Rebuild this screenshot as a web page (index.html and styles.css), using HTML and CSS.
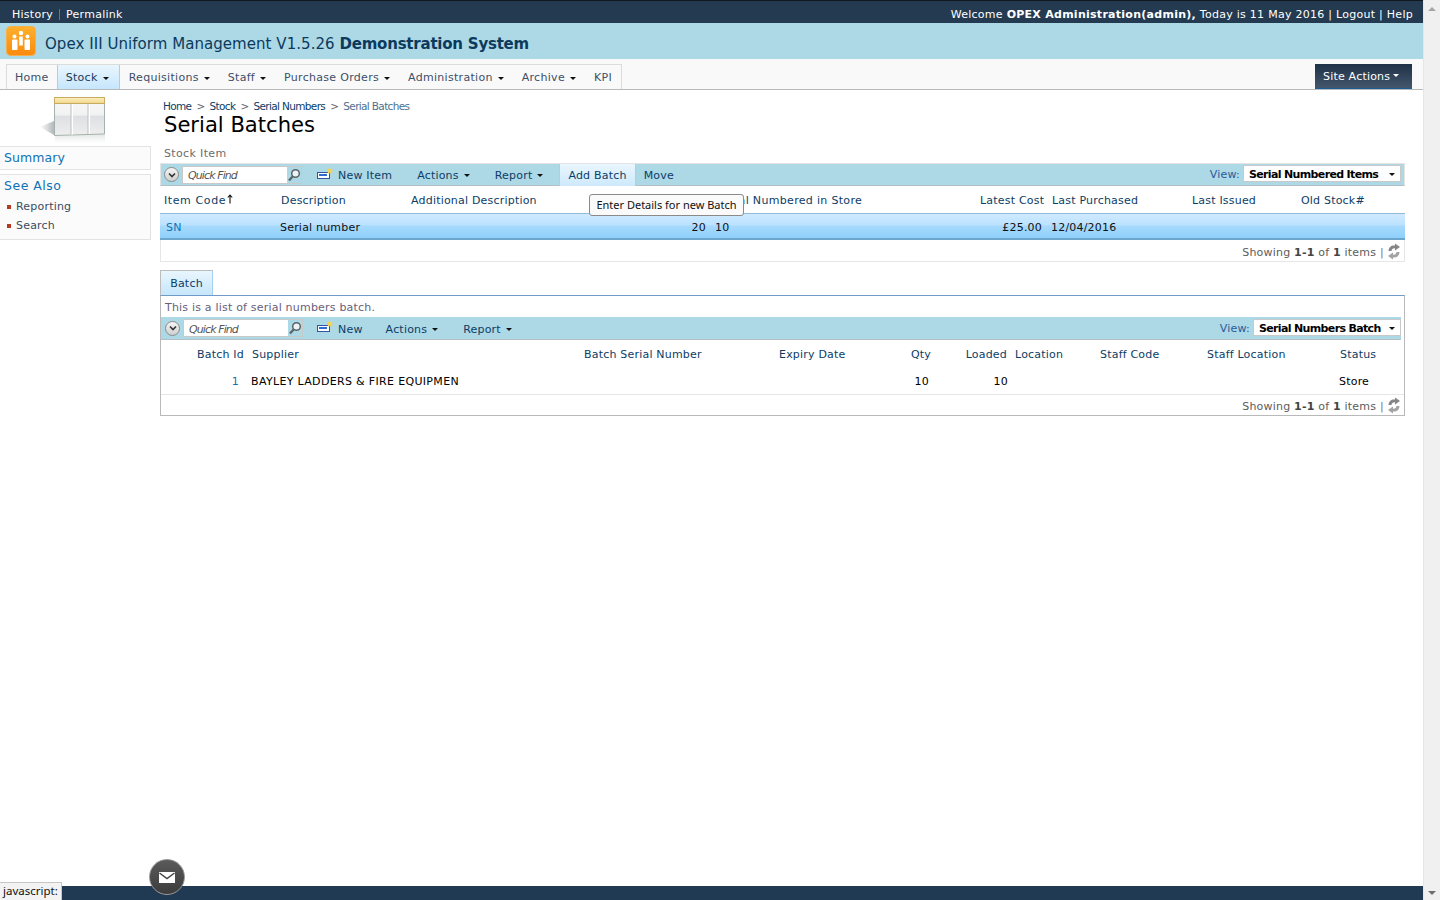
FILE: index.html
```html
<!DOCTYPE html>
<html lang="en">
<head>
<meta charset="utf-8">
<title>Serial Batches</title>
<link rel="stylesheet" href="styles.css">
</head>
<body>
<div class="app">
  <div class="page">
    <header class="topbar">
      <div class="topbar-left"><a>History</a><span class="pipe"></span><a>Permalink</a></div>
      <div class="topbar-right">Welcome <b>OPEX Administration(admin),</b> Today is 11 May 2016 | Logout | Help</div>
    </header>
    <div class="brand">
      <svg class="brand-logo" width="32" height="31" viewBox="0 0 32 31">
        <defs><linearGradient id="lg" x1="0" y1="0" x2="0" y2="1"><stop offset="0" stop-color="#fdb02c"/><stop offset="1" stop-color="#fb8a0e"/></linearGradient></defs>
        <rect x="0.5" y="0.5" width="29" height="29" rx="4" fill="url(#lg)" stroke="#f5b04a"/>
        <circle cx="15" cy="7" r="2.2" fill="#fff"/>
        <circle cx="8.5" cy="10.5" r="2" fill="#fff"/>
        <circle cx="21.5" cy="10.5" r="2" fill="#fff"/>
        <rect x="6" y="13.5" width="5.500" height="10.500" rx="1" fill="#fff"/>
        <rect x="18.5" y="13.5" width="5.500" height="10.500" rx="1" fill="#fff"/>
        <rect x="13.2" y="10.5" width="3.600" height="9" fill="#fff"/>
      </svg>
      <div class="brand-title">Opex III Uniform Management V1.5.26 <b>Demonstration System</b></div>
    </div>
    <nav class="navbar">
      <ul class="menu">
        <li class="menu-item home">Home</li>
        <li class="menu-item active">Stock<i class="caret"></i></li>
        <li class="menu-item">Requisitions<i class="caret"></i></li>
        <li class="menu-item">Staff<i class="caret"></i></li>
        <li class="menu-item">Purchase Orders<i class="caret"></i></li>
        <li class="menu-item">Administration<i class="caret"></i></li>
        <li class="menu-item">Archive<i class="caret"></i></li>
        <li class="menu-item">KPI</li>
      </ul>
      <div class="site-actions">Site Actions<i class="caret white"></i></div>
    </nav>
    <div class="content">
      <aside class="sidebar">
        <svg class="page-icon" width="70" height="50" viewBox="0 0 70 50">
          <defs>
            <linearGradient id="hd" x1="0" y1="0" x2="0" y2="1"><stop offset="0" stop-color="#fdf0c0"/><stop offset="1" stop-color="#f2d588"/></linearGradient>
            <linearGradient id="sh" x1="1" y1="0" x2="0" y2="0"><stop offset="0" stop-color="#b4b8ba"/><stop offset="1" stop-color="#fff"/></linearGradient>
            <linearGradient id="bd" x1="0" y1="0" x2="0" y2="1"><stop offset="0" stop-color="#f8f8f8"/><stop offset="0.45" stop-color="#f2f2f3"/><stop offset="0.5" stop-color="#dfe0e3"/><stop offset="1" stop-color="#eeeeef"/></linearGradient>
            <linearGradient id="rf" x1="0" y1="0" x2="0" y2="1"><stop offset="0" stop-color="#e4e8e6"/><stop offset="1" stop-color="#fff"/></linearGradient>
          </defs>
          <polygon points="0,31 14,25 14,39" fill="url(#sh)"/>
          <polygon points="15,40 65,38 65,47 15,47" fill="url(#rf)"/>
          <polygon points="14.500,1.500 64.500,1.500 64.500,38 14.500,39.500" fill="url(#bd)" stroke="#a3b2aa"/>
          <rect x="14.500" y="1.500" width="50" height="6" fill="url(#hd)" stroke="#c6ab62"/>
          <path d="M32 8V38.500M49 8V38" stroke="#fff" stroke-width="2"/>
          <path d="M31 8V38.500M48 8V38" stroke="#b9c0bc"/>
        </svg>
        <div class="side-box"><a class="side-title">Summary</a></div>
        <div class="side-box side-box-b">
          <a class="side-title wide">See Also</a>
          <ul class="side-list">
            <li>Reporting</li>
            <li>Search</li>
          </ul>
        </div>
      </aside>
      <main class="main">
        <div class="crumbs"><a>Home</a><span>&gt;</span><a>Stock</a><span>&gt;</span><a>Serial Numbers</a><span>&gt;</span><em>Serial Batches</em></div>
        <h1 class="page-title">Serial Batches</h1>
        <div class="section-label">Stock Item</div>

        <section class="list">
          <div class="toolbar">
            <span class="circle"><svg width="10" height="10" viewBox="0 0 10 10"><path d="M2 3.500L5 6.500 8 3.500" fill="none" stroke="#333" stroke-width="1.600"/></svg></span>
            <div class="quickfind"><span>Quick Find</span><i class="qf-btn"><svg width="14" height="14" viewBox="0 0 14 14"><circle cx="8.500" cy="5.500" r="3.800" fill="#eef3f5" stroke="#5c6468" stroke-width="1.500"/><path d="M5.600 8.400L2 12.500" stroke="#5c6468" stroke-width="2.200"/></svg></i></div>
            <span class="tb-item tb-new"><svg class="new-ic" width="16" height="12" viewBox="0 0 16 12"><rect x="0.500" y="4.500" width="12" height="6" fill="#fff" stroke="#33539e"/><rect x="2" y="6" width="8" height="2" fill="#2f6bd0"/><path d="M10.500 3H15.500M13 0.500V5.500M11 1L15 5M15 1L11 5" stroke="#f7d24a" stroke-width="1.100"/></svg><span>New Item</span></span>
            <span class="tb-item tb-actions">Actions<i class="caret"></i></span>
            <span class="tb-item tb-report">Report<i class="caret"></i></span>
            <span class="tb-item tb-hover">Add Batch</span>
            <span class="tb-item tb-move">Move</span>
            <span class="view">View:<span class="view-select vs-a">Serial Numbered Items<i class="caret black"></i></span></span>
          </div>
          <div class="row head grid-a">
            <span class="item-code">Item Code<svg class="sort" width="6" height="10" viewBox="0 0 6 10"><path d="M3 9.500V1M0.800 3.500L3 1 5.200 3.500" fill="none" stroke="#111" stroke-width="1.100"/></svg></span>
            <span>Description</span>
            <span>Additional Description</span>
            <span></span>
            <span class="serial-head">Serial Numbered in Store</span>
            <span class="right pr8">Latest Cost</span>
            <span>Last Purchased</span>
            <span>Last Issued</span>
            <span>Old Stock#</span>
          </div>
          <div class="row data selected grid-a">
            <span class="link shift2">SN</span>
            <span class="shift-1">Serial number</span>
            <span></span>
            <span class="right pr9">20</span>
            <span>10</span>
            <span class="right pr10">£25.00</span>
            <span class="shift-1">12/04/2016</span>
            <span></span>
            <span></span>
          </div>
          <div class="pager"><span class="pager-text">Showing <b>1-1</b> of <b>1</b> items<span class="bar">|</span></span>
            <svg class="refresh" width="14" height="17" viewBox="0 0 14 17"><path d="M1.500 8C1.700 4 4.500 2 8 2.500L8 0.500 13 4 8 7.500 8 5.300C6 5 4.800 6 4.500 8Z" fill="#858585"/><path d="M12.500 9C12.300 13 9.500 15 6 14.500L6 16.500 1 13 6 9.500 6 11.700C8 12 9.200 11 9.500 9Z" fill="#a3a3a3"/></svg>
          </div>
          <div class="tooltip">Enter Details for new Batch</div>
        </section>

        <div class="tabs"><span class="tab">Batch</span></div>
        <section class="panel">
          <div class="panel-desc">This is a list of serial numbers batch.</div>
          <div class="toolbar toolbar-b">
            <span class="circle"><svg width="10" height="10" viewBox="0 0 10 10"><path d="M2 3.500L5 6.500 8 3.500" fill="none" stroke="#333" stroke-width="1.600"/></svg></span>
            <div class="quickfind"><span>Quick Find</span><i class="qf-btn"><svg width="14" height="14" viewBox="0 0 14 14"><circle cx="8.500" cy="5.500" r="3.800" fill="#eef3f5" stroke="#5c6468" stroke-width="1.500"/><path d="M5.600 8.400L2 12.500" stroke="#5c6468" stroke-width="2.200"/></svg></i></div>
            <span class="tb-item tb-new"><svg class="new-ic" width="16" height="12" viewBox="0 0 16 12"><rect x="0.500" y="4.500" width="12" height="6" fill="#fff" stroke="#33539e"/><rect x="2" y="6" width="8" height="2" fill="#2f6bd0"/><path d="M10.500 3H15.500M13 0.500V5.500M11 1L15 5M15 1L11 5" stroke="#f7d24a" stroke-width="1.100"/></svg><span>New</span></span>
            <span class="tb-item tb-actions">Actions<i class="caret"></i></span>
            <span class="tb-item tb-report-b">Report<i class="caret"></i></span>
            <span class="view">View:<span class="view-select vs-b">Serial Numbers Batch<i class="caret black"></i></span></span>
          </div>
          <div class="row head head-b grid-b">
            <span class="right pr8">Batch Id</span>
            <span>Supplier</span>
            <span>Batch Serial Number</span>
            <span>Expiry Date</span>
            <span class="right">Qty</span>
            <span class="right pr8">Loaded</span>
            <span>Location</span>
            <span>Staff Code</span>
            <span>Staff Location</span>
            <span>Status</span>
          </div>
          <div class="row data data-b grid-b">
            <span class="right pr13 link">1</span>
            <span class="shift-1 supplier">BAYLEY LADDERS &amp; FIRE EQUIPMEN</span>
            <span></span>
            <span></span>
            <span class="right pr2">10</span>
            <span class="right pr7">10</span>
            <span></span>
            <span></span>
            <span></span>
            <span class="shift-1">Store</span>
          </div>
          <div class="pager pager-b"><span class="pager-text">Showing <b>1-1</b> of <b>1</b> items<span class="bar">|</span></span>
            <svg class="refresh" width="14" height="17" viewBox="0 0 14 17"><path d="M1.500 8C1.700 4 4.500 2 8 2.500L8 0.500 13 4 8 7.500 8 5.300C6 5 4.800 6 4.500 8Z" fill="#858585"/><path d="M12.500 9C12.300 13 9.500 15 6 14.500L6 16.500 1 13 6 9.500 6 11.700C8 12 9.200 11 9.500 9Z" fill="#a3a3a3"/></svg>
          </div>
        </section>
      </main>
    </div>
    <footer class="bottombar"></footer>
  </div>
  <div class="scrollbar"><i class="arrow up"></i><i class="arrow down"></i></div>
</div>
<div class="status">javascript:</div>
<div class="mail"><svg width="18" height="13" viewBox="0 0 18 13"><rect x="1" y="1" width="16" height="11" fill="#fff"/><path d="M1.500 2L9 7.500 16.500 2" fill="none" stroke="#444" stroke-width="1.500"/></svg></div>
</body>
</html>
```

FILE: styles.css
```css
* { box-sizing: border-box; }
html, body { margin: 0; padding: 0; height: 900px; overflow: hidden; background: #fff; }
body { font: 11px/13px "DejaVu Sans", Verdana, sans-serif; letter-spacing: 0.2px; color: #000; position: relative; }
ul { list-style: none; margin: 0; padding: 0; }

.app { display: flex; height: 900px; }
.page { width: 1423px; display: flex; flex-direction: column; height: 900px; }
.scrollbar { width: 17px; background: #f0f0f0; border-left: 1px solid #e6e6e6; display: flex; flex-direction: column; justify-content: space-between; align-items: center; padding: 7px 0 5px; }
.arrow { width: 0; height: 0; border-left: 4px solid transparent; border-right: 4px solid transparent; }
.arrow.up { border-bottom: 4px solid #a6a6a6; }
.arrow.down { border-top: 4px solid #6f6f6f; }

.topbar { height: 23px; background: #243a51; border-top: 1px solid #10171f; color: #fff; display: flex; justify-content: space-between; padding: 7px 10px 0 12px; letter-spacing: 0.27px; }
.topbar-left { display: flex; align-items: flex-start; }
.pipe { width: 1px; height: 11px; background: #64758a; margin: 1px 6px; }
.topbar-right b { font-weight: 700; }

.brand { height: 36px; background: #add8e6; display: flex; align-items: center; padding-left: 6px; }
.brand-logo { flex: none; margin-top: 1px; }
.brand-title { font-size: 15px; line-height: 20px; letter-spacing: 0.05px; color: #0b3a5d; margin: 6px 0 0 7px; white-space: nowrap; }
.brand-title b { letter-spacing: -0.22px; }

.navbar { height: 31px; background: #f9f9f9; border-bottom: 1px solid #b9b9b9; display: flex; justify-content: space-between; padding: 5px 11px 0 6px; letter-spacing: 0.3px; }
.menu { display: flex; height: 25px; border: 1px solid #dcdcdc; border-bottom: 0; }
.menu-item { display: flex; align-items: center; padding: 2px 8px 0 9px; color: #3c4f68; white-space: nowrap; line-height: 22px; }
.menu-item:last-child { padding-right: 9px; }
.menu-item.home { padding-left: 8px; padding-right: 8px; }
.menu-item.active { background: linear-gradient(#e9f6fe, #c6e6fc); border-left: 1px solid #a5d0ef; border-right: 1px solid #a5d0ef; color: #17395e; padding-left: 8px; padding-right: 9px; }
.caret { display: inline-block; width: 0; height: 0; border-left: 3px solid transparent; border-right: 3px solid transparent; border-top: 3px solid #111; margin: 0 1px 0 5px; }
.caret.white { border-top-color: #fff; margin-left: 3px; position: relative; top: -2px; vertical-align: middle; }
.site-actions { width: 97px; height: 25px; background: linear-gradient(#1e3247, #43566b); border-bottom: 1px solid #1c5d95; color: #fff; padding: 6px 0 0 8px; white-space: nowrap; letter-spacing: 0.2px; }

.content { flex: 1; display: flex; min-height: 0; }
.sidebar { width: 160px; flex: none; padding-top: 6px; }
.page-icon { display: block; margin-left: 40px; }
.side-box { width: 151px; background: #fbfbfb; border: 1px solid #e3e3e3; border-left: 0; padding: 3px 0 3px 4px; height: 24px; }
.side-box-b { height: 66px; margin-top: 4px; padding-top: 3px; }
.side-title { font-size: 12.5px; line-height: 16px; letter-spacing: 0.1px; color: #0f72b5; display: block; }
.side-title.wide { letter-spacing: 0.5px; }
.side-list { margin: 3px 0 0 3px; }
.side-list li { color: #3a4b60; line-height: 19px; padding-left: 9px; position: relative; }
.side-list li::before { content: ""; position: absolute; left: 0; top: 8px; width: 4px; height: 4px; background: #b53a22; }

.main { width: 1245px; flex: none; padding-top: 10px; }
.crumbs { padding-left: 3px; height: 14px; display: flex; font-size: 10.5px; letter-spacing: -0.65px; color: #0c3d66; white-space: nowrap; }
.crumbs span { margin: 0 5px; color: #666; }
.crumbs em { font-style: normal; color: #4f6f8d; }
.page-title { margin: -1px 0 0 4px; font-size: 21.1px; line-height: 24px; font-weight: 400; letter-spacing: 0; color: #000; }
.section-label { color: #6c6c6c; padding: 10px 0 0 4px; height: 26px; line-height: 13px; letter-spacing: 0.35px; }

.list { position: relative; }
.toolbar { height: 23px; background: #add8e6; border: 1px solid #e4e4e4; border-bottom: 1px solid #b5bfc4; display: flex; align-items: center; color: #0c3d66; padding-left: 3px; }
.toolbar-b { border: 0; border-bottom: 1px solid #b5bfc4; margin-right: 3px; padding-left: 4px; }
.circle { width: 15px; height: 15px; border-radius: 50%; background: linear-gradient(#f5f5f5, #cfcfcf); border: 1px solid #8b8b8b; display: flex; align-items: center; justify-content: center; flex: none; }
.quickfind { width: 120px; height: 18px; margin-left: 3px; background: #fff; border: 1px solid #c9c9c9; display: flex; justify-content: space-between; align-items: center; padding-left: 5px; font-style: italic; color: #555; letter-spacing: -0.9px; flex: none; }
.quickfind > span { padding-top: 2px; }
.qf-btn { width: 14px; height: 16px; background: #add8e6; display: flex; align-items: center; font-style: normal; }
.tb-item { display: flex; align-items: center; height: 21px; white-space: nowrap; flex: none; padding-top: 2px; }
.new-ic { margin-right: 5px; flex: none; position: relative; top: -2px; }
.tb-new { margin-left: 15px; }
.tb-actions { margin-left: 25px; }
.tb-report { margin-left: 24px; }
.tb-report-b { margin-left: 24px; }
.tb-hover { margin-left: 15px; padding: 2px 8px 0; background: linear-gradient(#e9f6fe, #cde9fc); border: 1px solid #a5d0ef; border-width: 0 1px; height: 22px; }
.tb-move { margin-left: 8px; }
.toolbar-b .tb-new { margin-left: 14px; }
.toolbar-b .tb-actions { margin-left: 23px; }
.view { margin-left: auto; display: flex; align-items: center; color: #2a5a99; padding-right: 3px; }
.toolbar-b .view { padding-right: 0; }
.view-select { height: 17px; background: #fff; border: 1px solid #c9c9c9; color: #000; font-weight: 700; letter-spacing: -0.65px; margin-left: 3px; padding: 2px 5px 0 5px; display: flex; align-items: center; justify-content: space-between; position: relative; top: -1px; white-space: nowrap; }
.vs-a { width: 158px; }
.vs-b { width: 148px; }
.caret.black { margin: 0; }

.row { display: grid; align-items: center; white-space: nowrap; }
.row .right { text-align: right; }
.row .pr2 { padding-right: 2px; }
.row .pr7 { padding-right: 7px; }
.row .pr8 { padding-right: 8px; }
.row .pr9 { padding-right: 9px; }
.row .pr10 { padding-right: 10px; }
.row .pr13 { padding-right: 13px; }
.grid-a { grid-template-columns: 117px 130px 181px 123px 265px 72px 140px 109px 1fr; padding-left: 4px; }
.grid-b { grid-template-columns: 91px 332px 195px 104px 48px 84px 85px 107px 133px 1fr; }
.head { height: 27px; color: #0c3d66; padding-top: 2px; }
.item-code { letter-spacing: 0.6px; }
.serial-head { letter-spacing: 0.32px; padding-left: 1px; }
.supplier { letter-spacing: 0.33px; }
.sort { margin-left: 1px; }
.selected { height: 27px; border-top: 1px solid #92bcd9; border-bottom: 2px solid #6da6cd; background: linear-gradient(#cfeaff 0, #bce2ff 45%, #a7dafd 50%, #8ed0fb 100%); padding-top: 2px; color: #111; }
.link { color: #0f72b5; }
.shift2 { padding-left: 2px; }
.shift-1 { margin-left: -1px; }
.pager { height: 22px; border: 1px solid #e6e6e6; border-top: 0; color: #5c5c5c; display: flex; align-items: center; justify-content: flex-end; padding: 3px 3px 0 0; white-space: nowrap; }
.pager b { color: #444; }
.bar { margin-left: 4px; color: #7a6d8a; }
.refresh { margin-left: 3px; position: relative; top: -1px; }

.tooltip { position: absolute; left: 429px; top: 31px; width: 155px; height: 22px; background: #fafafa; border: 1px solid #8a8a8a; border-radius: 3px; font: 11px/20px "Noto Sans", sans-serif; letter-spacing: 0; color: #111; text-align: center; white-space: nowrap; }

.tabs { margin-top: 8px; height: 25px; display: flex; }
.tab { width: 53px; height: 25px; background: linear-gradient(#e9f6fe, #c6e6fc); border: 1px solid #bcbcbc; border-bottom: 0; border-right-color: #a5d0ef; color: #0c3d66; text-align: center; line-height: 25px; }
.panel { border: 1px solid #b9b9b9; border-top-color: #6f9ac9; height: 121px; }
.panel-desc { height: 21px; padding: 5px 0 0 4px; color: #66607a; }
.head-b { height: 28px; padding-top: 0; }
.data-b { height: 27px; border-bottom: 1px solid #e6e6e6; }
.pager-b { border: 0; height: 21px; padding-top: 2px; }

.bottombar { margin-top: auto; height: 14px; background: #1f3a52; flex: none; }
.status { position: absolute; left: 0; bottom: 0; width: 62px; height: 18px; background: #f3f3f3; border: 1px solid #c6c6c6; border-left: 0; border-bottom: 0; font: 11.5px/16px "Noto Sans", sans-serif; letter-spacing: 0; padding-left: 3px; color: #111; }
.mail { position: absolute; left: 149px; top: 859px; width: 36px; height: 36px; border-radius: 50%; background: linear-gradient(#5a5a5a, #3c3c3c); border: 1px solid #9a9a9a; display: flex; align-items: center; justify-content: center; }
```
